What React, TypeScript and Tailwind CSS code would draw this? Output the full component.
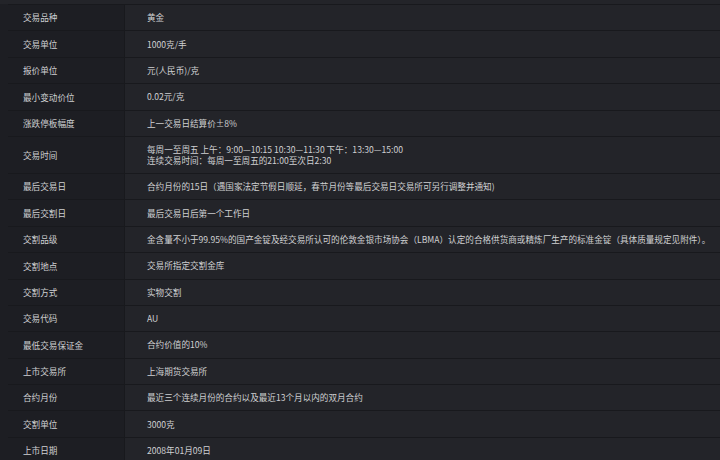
const rows: { label: string; value: string[] }[] = [
  { label: "交易品种", value: ["黄金"] },
  { label: "交易单位", value: ["1000克/手"] },
  { label: "报价单位", value: ["元(人民币)/克"] },
  { label: "最小变动价位", value: ["0.02元/克"] },
  { label: "涨跌停板幅度", value: ["上一交易日结算价±8%"] },
  {
    label: "交易时间",
    value: [
      "每周一至周五 上午：9:00—10:15 10:30—11:30 下午：13:30—15:00",
      "连续交易时间：每周一至周五的21:00至次日2:30",
    ],
  },
  { label: "最后交易日", value: ["合约月份的15日（遇国家法定节假日顺延，春节月份等最后交易日交易所可另行调整并通知)"] },
  { label: "最后交割日", value: ["最后交易日后第一个工作日"] },
  {
    label: "交割品级",
    value: [
      "金含量不小于99.95%的国产金锭及经交易所认可的伦敦金银市场协会（LBMA）认定的合格供货商或精炼厂生产的标准金锭（具体质量规定见附件）。",
    ],
  },
  { label: "交割地点", value: ["交易所指定交割金库"] },
  { label: "交割方式", value: ["实物交割"] },
  { label: "交易代码", value: ["AU"] },
  { label: "最低交易保证金", value: ["合约价值的10%"] },
  { label: "上市交易所", value: ["上海期货交易所"] },
  { label: "合约月份", value: ["最近三个连续月份的合约以及最近13个月以内的双月合约"] },
  { label: "交割单位", value: ["3000克"] },
  { label: "上市日期", value: ["2008年01月09日"] },
];

export default function App() {
  return (
    <div
      className="h-[460px] w-[720px] overflow-hidden bg-[#232429] pt-[4px] text-[8.6px] text-[#cfd0d2]"
      style={{ fontFamily: '"Noto Sans CJK SC", "Noto Sans", sans-serif' }}
    >
      <div className="bg-[#1d1e23] pl-[8px]">
        {rows.map((row) => (
          <div
            key={row.label}
            className={`grid grid-cols-[117px_1fr] border-t border-[#18191d] ${
              row.value.length > 1 ? "h-[37px]" : "h-[26.4px]"
            }`}
          >
            <div className="flex items-center border-r border-[#18191d] bg-[#1d1e23] pl-[15px] leading-none">
              {row.label}
            </div>
            <div className="flex flex-col justify-center bg-[#232429] pl-[22px] leading-[11px] whitespace-nowrap">
              {row.value.map((line) => (
                <span key={line}>{line}</span>
              ))}
            </div>
          </div>
        ))}
      </div>
    </div>
  );
}
